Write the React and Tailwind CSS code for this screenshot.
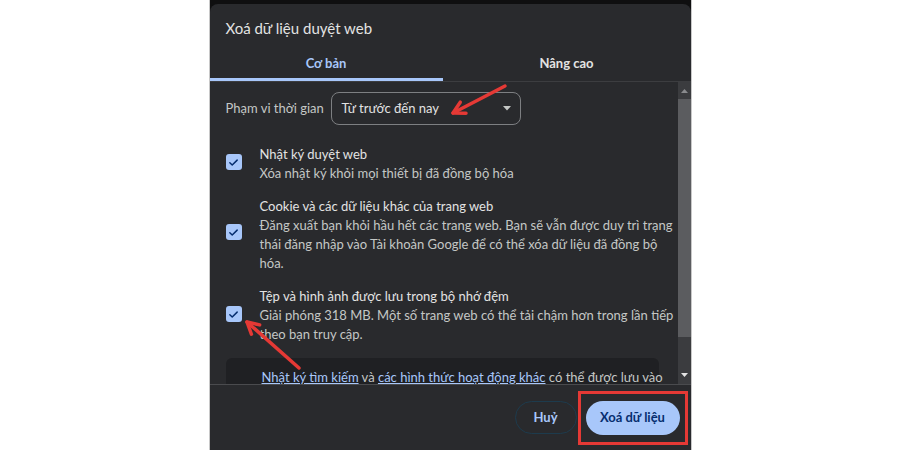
const font = { fontFamily: 'Lato, "Noto Sans", sans-serif' };

const Check = () => (
  <span className="flex h-[16px] w-[16px] shrink-0 items-center justify-center rounded-[3px] bg-[#a8c7fa]">
    <svg width="11" height="11" viewBox="0 0 12 12" fill="none">
      <path d="M2 6.3l2.6 2.5L10 3.4" stroke="#062e6f" strokeWidth="1.6" strokeLinecap="round" strokeLinejoin="round" />
    </svg>
  </span>
);

const Option = ({ title, lines, checkTop }) => (
  <div className="flex">
    <div className="w-[34px] shrink-0" style={{ paddingTop: checkTop }}>
      <Check />
    </div>
    <div className="whitespace-nowrap text-[13px] leading-[19px]">
      <div className="text-[#e3e3e3]">{title}</div>
      {lines.map((l, i) => (
        <div key={i} className="text-[#c4c7c5]">
          {l}
        </div>
      ))}
    </div>
  </div>
);

// red callout arrow: tail -> head
const Arrow = ({ x1, y1, x2, y2 }) => {
  const a = Math.atan2(y2 - y1, x2 - x1);
  const len = 13;
  const spread = 0.5;
  const p1 = [x2 - len * Math.cos(a - spread), y2 - len * Math.sin(a - spread)];
  const p2 = [x2 - len * Math.cos(a + spread), y2 - len * Math.sin(a + spread)];
  return (
    <g stroke="#e53935" strokeWidth="3.5" strokeLinecap="round" fill="none">
      <line x1={x1} y1={y1} x2={x2} y2={y2} />
      <polyline points={`${p1[0]},${p1[1]} ${x2},${y2} ${p2[0]},${p2[1]}`} strokeLinejoin="round" />
    </g>
  );
};

export default function App() {
  return (
    <div className="relative flex h-[450px] w-[900px] justify-center overflow-hidden bg-white" style={font}>
      <div className="flex h-full w-[483px] flex-col border-x border-[#c8c8c8] bg-[#0f0f10] pt-[4px]">
        <div className="flex flex-1 flex-col overflow-hidden rounded-t-[8px] bg-[#292a2d]">
          <div className="h-[40px] pl-[16px] pt-[14px] text-[15px] leading-[20px] text-[#e3e3e3]">
            Xoá dữ liệu duyệt web
          </div>

          <div className="flex h-[38px] border-b border-[#3c3d40] text-[13px] font-bold">
            <div className="flex w-[233px] items-center justify-center border-b-[3px] border-[#a8c7fa] pt-[5px] text-[#a8c7fa]">
              Cơ bản
            </div>
            <div className="flex flex-1 items-center justify-center pt-[3px] text-[#e3e3e3]">Nâng cao</div>
          </div>

          <div className="flex h-[303px] border-b border-[#4a4b4e]">
            <div className="flex flex-1 flex-col overflow-hidden pl-[16px] pr-[19px]">
              <div className="flex items-center pt-[10px]">
                <span className="w-[105px] text-[13px] text-[#c4c7c5]">Phạm vi thời gian</span>
                <div className="flex h-[33px] w-[190px] items-center justify-between rounded-[8px] border border-[#7d7f82] pl-[10px] pr-[9px] text-[13px] text-[#e3e3e3]">
                  <span>Từ trước đến nay</span>
                  <svg width="8" height="5" viewBox="0 0 8 5">
                    <path d="M0 0h8L4 4.5z" fill="#c4c7c5" />
                  </svg>
                </div>
              </div>

              <div className="mt-[20px] flex flex-col gap-[14px]">
                <Option title="Nhật ký duyệt web" lines={["Xóa nhật ký khỏi mọi thiết bị đã đồng bộ hóa"]} checkTop={9} />
                <Option
                  title="Cookie và các dữ liệu khác của trang web"
                  lines={[
                    "Đăng xuất bạn khỏi hầu hết các trang web. Bạn sẽ vẫn được duy trì trạng",
                    "thái đăng nhập vào Tài khoản Google để có thể xóa dữ liệu đã đồng bộ",
                    "hóa.",
                  ]}
                  checkTop={27}
                />
                <Option
                  title="Tệp và hình ảnh được lưu trong bộ nhớ đệm"
                  lines={["Giải phóng 318 MB. Một số trang web có thể tải chậm hơn trong lần tiếp", "theo bạn truy cập."]}
                  checkTop={19}
                />
              </div>

              <div className="mt-[14px] h-[40px] shrink-0 whitespace-nowrap rounded-t-[6px] bg-[#1f2023] pl-[36px] pt-[10px] text-[13px] leading-[19px] text-[#c4c7c5]">
                <span className="text-[#a8c7fa] underline">Nhật ký tìm kiếm</span> và{" "}
                <span className="text-[#a8c7fa] underline">các hình thức hoạt động khác</span> có thể được lưu vào
              </div>
            </div>

            {/* scrollbar */}
            <div className="flex w-[13px] flex-col items-center bg-[#3b3c3f]">
              <svg className="mt-[7px]" width="7" height="4" viewBox="0 0 7 4">
                <path d="M0 4h7L3.5 0z" fill="#8a8b8e" />
              </svg>
              <div className="mt-[6px] h-[238px] w-full bg-[#5b5c5f]" />
              <div className="flex-1" />
              <svg className="mb-[7px]" width="7" height="4" viewBox="0 0 7 4">
                <path d="M0 0h7L3.5 4z" fill="#e3e3e3" />
              </svg>
            </div>
          </div>

          <div className="flex flex-1 items-center justify-end gap-[1px] pr-[3px]">
            <button className="h-[33px] w-[62px] rounded-full border border-[#1d3b4d] text-[13px] font-bold text-[#a8c7fa]">
              Huỷ
            </button>
            <div className="border-[3px] border-[#e53935] px-[5px] py-[7px]">
              <button className="block h-[34px] w-[94px] rounded-full bg-[#a8c7fa] text-[13px] font-bold text-[#062e6f]">
                Xoá dữ liệu
              </button>
            </div>
          </div>
        </div>
      </div>

      <svg className="pointer-events-none absolute left-0 top-0" width="900" height="450">
        <Arrow x1={505} y1={86} x2={453} y2={113} />
        <Arrow x1={299} y1={368} x2={247} y2={322} />
      </svg>
    </div>
  );
}
